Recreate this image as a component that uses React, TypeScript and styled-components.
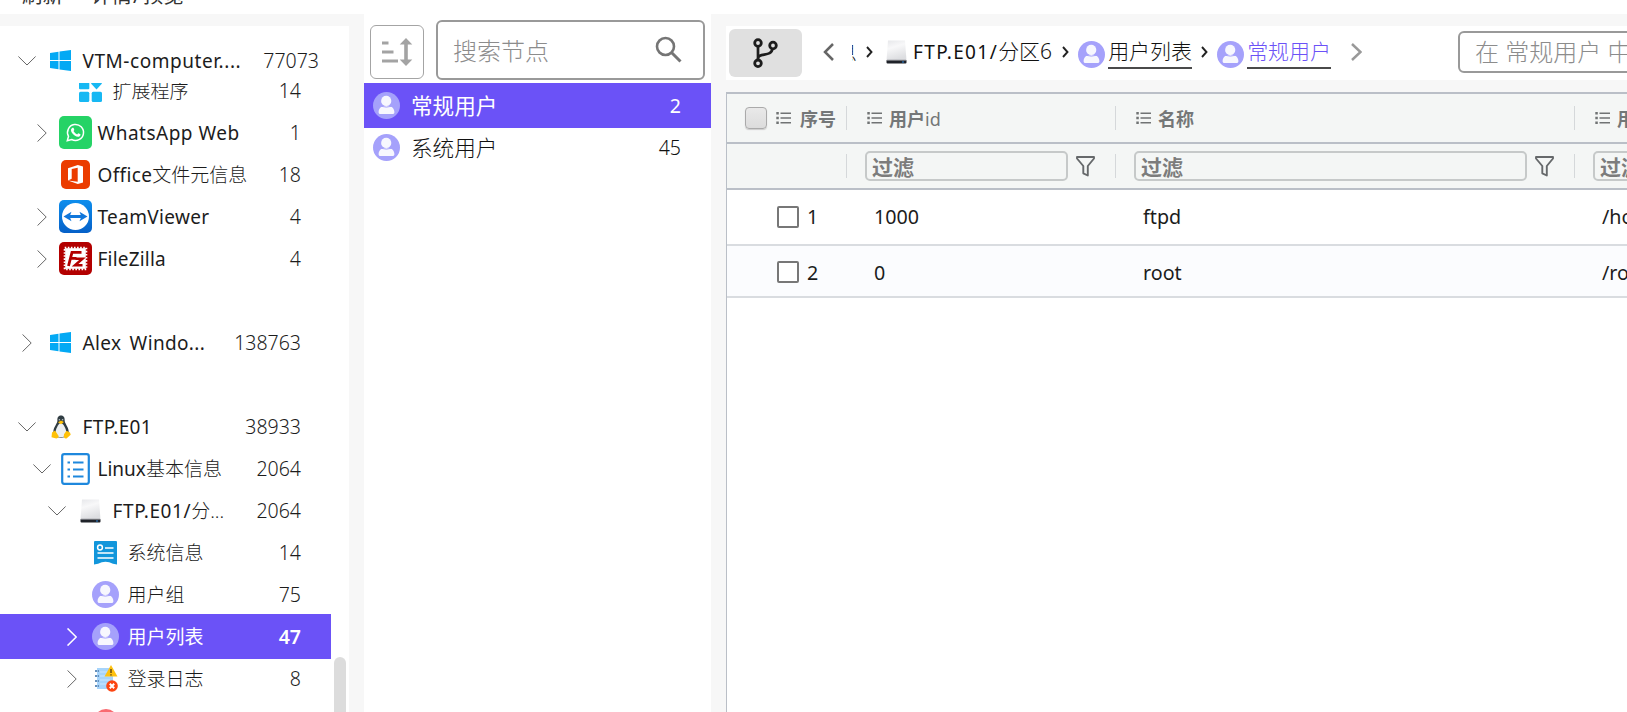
import React from 'react';
import styled, { createGlobalStyle, css } from 'styled-components';

const GlobalStyle = createGlobalStyle`
  * { box-sizing: border-box; }
  body { margin: 0; overflow: hidden; background: #f7f7f7; }
  svg { display: block; flex: none; }
`;

const sans = `"Noto Sans", "Noto Sans CJK SC", sans-serif`;
const accent = '#6b52f7';

const Page = styled.div`
  width: 100%;
  height: 712px;
  display: flex;
  flex-direction: column;
  overflow: hidden;
  font: 300 20px ${sans};
  color: #111;
  white-space: nowrap;
`;

const MenuBar = styled.div`
  height: 14px;
  flex: none;
  display: flex;
  align-items: flex-end;
  gap: 28px;
  padding: 0 0 6px 22px;
  background: #fff;
  overflow: hidden;
  font-size: 20.5px;
  font-weight: 400;
  line-height: 26px;
  color: #333;
`;

const Slash = styled.span`
  padding: 0 2px 0 1px;
`;

const Workspace = styled.div`
  flex: 1;
  min-height: 0;
  display: grid;
  grid-template-columns: 349px 347px 1fr;
  column-gap: 15px;
`;

/* ---------- left tree ---------- */

const TreePanel = styled.aside`
  margin-top: 12px;
  display: flex;
  flex-direction: column;
  background: #fff;
  min-height: 0;
`;

const PinnedNode = styled.div`
  height: 57px;
  padding-top: 12px;
  flex: none;
`;

const TreeScroll = styled.div`
  flex: 1;
  min-height: 0;
  display: flex;
  justify-content: space-between;
  overflow: hidden;
`;

const TreeRows = styled.div`
  width: 331px;
  margin-top: -15px;
`;

const ScrollTrack = styled.div`
  width: 15px;
  padding-top: 574px;
`;

const ScrollThumb = styled.div`
  width: 12px;
  height: 200px;
  border-radius: 6px;
  background: #dcdcdc;
`;

const Node = styled.div<{ $depth: number; $selected?: boolean }>`
  height: 45px;
  margin-bottom: -3px;
  padding: 0 30px 0 ${(p) => 12 + p.$depth * 15}px;
  display: grid;
  grid-template-columns: 30px 35px 1fr auto;
  column-gap: 0;
  align-items: center;
  justify-items: center;
  color: #1c1c1c;
  ${(p) =>
    p.$selected &&
    css`
      background: ${accent};
      color: #fff;
      font-weight: 400;
    `}
`;

const IconSlot = styled.span`
  display: flex;
  margin-left: 2px;
`;

const Label = styled.span`
  justify-self: start;
  padding-left: 5.5px;
  font-size: 19px;
  line-height: 28px;
`;

const Latin = styled.span<{ $track?: number; $words?: number }>`
  font-size: 19px;
  font-weight: 400;
  letter-spacing: ${(p) => p.$track ?? 0.35}px;
  word-spacing: ${(p) => p.$words ?? 0}px;
`;

const Count = styled.span<{ $strong?: boolean }>`
  padding-top: 1px;
  font-size: 19.5px;
  line-height: 28px;
  font-weight: ${(p) => (p.$strong ? 600 : 300)};
`;

/* ---------- middle list ---------- */

const ListPanel = styled.section`
  background: #fff;
`;

const ListTools = styled.div`
  height: 69px;
  display: flex;
  align-items: flex-start;
  gap: 12px;
  padding: 6px 6px 0;
`;

const SortButton = styled.div`
  width: 54px;
  height: 54px;
  margin-top: 5px;
  padding-bottom: 1px;
  display: grid;
  place-items: center;
  border: 1px solid #a4a4a4;
  border-radius: 6px;
`;

const SearchBox = styled.div`
  flex: 1;
  height: 60px;
  display: flex;
  align-items: center;
  justify-content: space-between;
  padding: 0 21px 2px 15px;
  border: 2px solid #999;
  border-radius: 6px;
  font-size: 24px;
  color: #8c8c8c;
`;

const ListRow = styled.div<{ $selected?: boolean }>`
  height: 45px;
  margin-bottom: -3px;
  padding: 0 30px 0 9px;
  display: flex;
  align-items: center;
  font-size: 21.6px;
  line-height: 30px;
  ${(p) =>
    p.$selected &&
    css`
      background: ${accent};
      color: #fff;
      font-weight: 400;
    `}
`;

const ListName = styled.span`
  flex: 1;
  padding: 1px 0 0 11px;
`;

const ListCount = styled.span<{ $strong?: boolean }>`
  padding-top: 1px;
  font-size: 19.5px;
  font-weight: ${(p) => (p.$strong ? 400 : 300)};
`;

/* ---------- right content ---------- */

const Content = styled.main`
  min-width: 0;
  overflow: hidden;
  display: flex;
  flex-direction: column;
`;

const PathBar = styled.div`
  height: 54px;
  margin: 12px 0;
  padding-left: 3px;
  flex: none;
  display: flex;
  align-items: center;
  background: #fff;
  overflow: hidden;
`;

const BranchButton = styled.div`
  width: 73px;
  height: 48px;
  flex: none;
  display: grid;
  place-items: center;
  border-radius: 6px;
  background: #e0e0e0;
`;

const Crumbs = styled.nav`
  width: 656px;
  flex: none;
  height: 54px;
  padding: 0 0 2px 21px;
  display: flex;
  align-items: center;
  font-size: 21px;
`;

const CutCrumb = styled.span`
  width: 5px;
  margin-left: 18px;
  display: flex;
  justify-content: flex-end;
  overflow: hidden;
  line-height: 30px;
`;

const Separator = styled.span`
  width: 7px;
  margin: 0 9px 0 9px;
`;

const Crumb = styled.span`
  display: flex;
  align-items: center;
`;

const CrumbText = styled.span<{ $kind?: 'link' | 'current' }>`
  height: 32px;
  margin-left: 3px;
  line-height: 28px;
  color: ${(p) => (p.$kind === 'current' ? accent : '#111')};
  ${(p) =>
    p.$kind &&
    css`
      margin-top: 2px;
      border-bottom: 2px solid #4a4a4a;
    `}
`;

const DiskCrumb = styled(Crumb)`
  margin: 0 1px 0 4px;
  ${CrumbText} { margin-left: 6px; padding-top: 1px; }
`;

const CrumbIcon = styled.span`
  padding-top: 4px;
`;

const Forward = styled.span`
  margin: 0 0 0 20px;
`;

const FilterAll = styled.div`
  width: 400px;
  height: 42px;
  flex: none;
  margin-bottom: 2px;
  padding-left: 15px;
  border: 2px solid #999;
  border-radius: 6px;
  font-size: 24px;
  line-height: 38px;
  color: #8c8c8c;
`;

const Table = styled.div`
  flex: 1;
  border-top: 2px solid #babfc7;
  border-left: 1px solid #babfc7;
  background: #fff;
`;

const tableColumns = css`
  display: grid;
  grid-template-columns: 120px 269px 459px 1fr;
`;

const HeadRow = styled.div<{ $height: number }>`
  ${tableColumns}
  height: ${(p) => p.$height}px;
  align-items: center;
  background: #f4f6f5;
  border-bottom: 2px solid #babfc7;
  color: #747778;
`;

const HeadCell = styled.div`
  height: 24px;
  display: flex;
  align-items: center;
  gap: 7px;
  padding-left: 20px;
  border-right: 1px solid #d5d8da;
  font-size: 18px;
  font-weight: 600;
  &:first-child { padding-left: 18px; gap: 9px; }
`;

const HeadId = styled.span`
  font-weight: 400;
`;

const FilterCell = styled.div`
  height: 24px;
  display: flex;
  align-items: center;
  gap: 8px;
  padding: 0 20px 0 18px;
  border-right: 1px solid #d5d8da;
`;

const FilterInput = styled.div`
  flex: 1;
  height: 30px;
  padding-left: 5px;
  border: 2px solid #c6c9c9;
  border-radius: 5px;
  font-size: 21px;
  font-weight: 700;
  line-height: 29px;
  color: #7c7c7c;
`;

const BodyRow = styled.div<{ $height: number; $alt?: boolean }>`
  ${tableColumns}
  height: ${(p) => p.$height}px;
  align-items: center;
  background: ${(p) => (p.$alt ? '#fbfcfe' : '#fff')};
  border-bottom: 2px solid #d9dce0;
  font-weight: 400;
  color: #1c1c1c;
  padding: ${(p) => (p.$alt ? '2px 0 0' : '0 0 1px')};
`;

const BodyCell = styled.div`
  padding-left: 27px;
  display: flex;
  align-items: center;
  font-size: 19.7px;
`;

const IndexCell = styled(BodyCell)`
  padding-left: 50px;
  gap: 8px;
`;

const HeaderCheck = styled.span`
  width: 22px;
  height: 22px;
  border: 1px solid #aaa;
  border-radius: 4px;
  background: linear-gradient(#e9e9e9, #dcdcdc);
  box-shadow: 0 1px 1px #ccc;
`;

const RowCheck = styled.span`
  width: 22px;
  height: 22px;
  border: 2px solid #777;
  border-radius: 2px;
  background: #fff;
`;

/* ---------- icons ---------- */

const Arrow = ({ open, color = '#666' }: { open?: boolean; color?: string }) =>
  open ? (
    <svg width="18" height="10" viewBox="0 0 18 10" fill="none" stroke={color}>
      <path d="M.4.5 9 9l8.600-8.500" />
    </svg>
  ) : (
    <svg width="10" height="18" viewBox="0 0 10 18" fill="none" stroke={color} strokeWidth={color === '#fff' ? 1.5 : 1}>
      <path d="M.5.4 9.200 9 .5 17.600" />
    </svg>
  );

const WindowsIcon = () => (
  <svg width="21" height="21" viewBox="0 0 21 21" fill="#03a9f4">
    <path d="M0 3 8.500 1.800V10H0zM9.500 1.600 21 0v10H9.500zM0 11h8.500v8.200L0 18zM9.500 11H21v10L9.500 19.400z" />
  </svg>
);

const ExtensionIcon = () => (
  <svg width="23" height="23" viewBox="0 0 23 23" fill="#17b8f3">
    <rect width="10.300" height="10.300" rx="1" />
    <path d="M17.500 -1 23 4.500 17.500 10.500 12 4.500z" />
    <rect y="12.700" width="10.300" height="10.300" rx="1.500" />
    <rect x="12.700" y="12.700" width="10.300" height="10.300" rx="1.500" />
  </svg>
);

const WhatsAppIcon = () => (
  <svg width="33" height="33" viewBox="0 0 33 33">
    <rect width="33" height="33" rx="5" fill="#25d366" />
    <path d="m8.300 24.700 1.200-4.400a8 8 0 1 1 3.200 3.200z" fill="none" stroke="#fff" strokeWidth="1.500" />
    <path d="M13.100 12c.5-.5 1.300-.4 1.500.1l.7 1.700c.1.400-.6 1-.8 1.300.9 1.700 2 2.500 3.700 3.300.4-.2.900-1.200 1.300-1.100l1.900.9c.3.600-.2 1.800-1.100 2.200-1.300.6-3 .1-4.700-1-2-1.400-3.500-3.300-3.600-5.200 0-.9.500-1.700 1.100-2.200z" fill="#fff" />
  </svg>
);

const OfficeIcon = () => (
  <svg width="29" height="29" viewBox="0 0 29 29">
    <rect width="29" height="29" rx="5" fill="#eb3c00" />
    <path d="M7 8.200 16.800 5l5.200 1.400v16L16.800 24 7 20.500l9.700 1.200V7.700l-6 1.400v9.700L7 20.500z" fill="#fff" />
  </svg>
);

const TeamViewerIcon = () => (
  <svg width="33" height="33" viewBox="0 0 33 33">
    <defs>
      <linearGradient id="tv" x2="0" y2="1">
        <stop stopColor="#0d8eed" />
        <stop offset="1" stopColor="#0560c8" />
      </linearGradient>
    </defs>
    <rect width="33" height="33" rx="5" fill="url(#tv)" />
    <circle cx="16.500" cy="16.500" r="13.500" fill="#fff" />
    <path d="m4.500 16.500 8-4.800-1.300 3.300h10.600l-1.300-3.300 8 4.800-8 4.800 1.300-3.300H11.200l1.300 3.300z" fill="#1077db" />
  </svg>
);

const FileZillaIcon = () => (
  <svg width="33" height="33" viewBox="0 0 33 33">
    <rect width="33" height="33" rx="5" fill="#b30000" />
    <rect x="6.200" y="6.200" width="20.600" height="20.600" fill="#fff" />
    <rect x="5.700" y="5.700" width="21.600" height="21.600" fill="none" stroke="#fff" strokeWidth="2" strokeDasharray="1.600 1.490" />
    <g fill="none" stroke="#b30000" strokeWidth="2.800">
      <path d="M9.500 24 13 10.300h9.500M11.500 16.300h6" />
      <path d="M16.500 16.700h7L16 23.200h7.500" strokeWidth="2.500" />
    </g>
  </svg>
);

const TuxIcon = () => (
  <svg width="20" height="24" viewBox="0 0 20 24">
    <path d="M10 .5c3 0 3.800 2.300 3.700 5.200.1 3 4 6.500 4 11 0 3-3 6-7.700 6s-7.600-3-7.600-6c0-4.500 3.900-8 4-11C6.200 2.800 7 .5 10 .5z" fill="#303c42" />
    <path d="M9.800 8c2.300 0 5.500 6 5.500 9.500 0 3-2 4.800-5.300 4.800s-5.500-1.800-5.500-4.800S7.500 8 9.800 8z" fill="#eceff1" />
    <circle cx="8.400" cy="4.700" r=".8" fill="#b9c2c6" />
    <circle cx="11.600" cy="4.700" r=".8" fill="#b9c2c6" />
    <path d="M7 7.200 10 5.500l3 1.500L10 9.300zM1 17.500l3-2 3.500 5.200c.5 2-1.500 3-3.200 2.600L.5 22.200zM19 17.500l-3.500-1.700-2.500 3.400c-.7 3 .5 4.600 2.500 4.200l4.200-3.600z" fill="#ffc107" />
  </svg>
);

const ListDocIcon = () => (
  <svg width="29" height="32" viewBox="0 0 29 32" fill="none" stroke="#1e88dd" strokeWidth="2.200">
    <rect x="1.200" y="1.200" width="26.600" height="29.600" rx="2" />
    <path d="M12 9.500h10.500M12 16.500h10.500M12 23.500h10.500M6.500 9.500h2.500M6.500 16.500h2.500M6.500 23.500h2.500" strokeWidth="2" />
  </svg>
);

const DiskIcon = () => (
  <svg width="21" height="24" viewBox="0 0 21 24">
    <defs>
      <linearGradient id="disk" x2=".3" y2="1">
        <stop stopColor="#e6e7ea" />
        <stop offset=".4" stopColor="#f8f8f9" />
        <stop offset="1" stopColor="#dddee1" />
      </linearGradient>
    </defs>
    <path d="M2 .5h17L20.500 20.500H.5z" fill="url(#disk)" />
    <path d="M.5 20.300h20v2.100q0 1-1 1h-18q-1 0-1-1z" fill="#1f2229" />
    <path d="M1 20.200h19" stroke="#85888d" strokeWidth=".8" />
    <path d="M16 22h2" stroke="#2d83d5" />
  </svg>
);

const SystemInfoIcon = () => (
  <svg width="23" height="24" viewBox="0 0 23 24">
    <path d="M0 1q0-1 1-1h21q1 0 1 1v22.500l-4-.8q-7.500-4-15 0l-4 .8z" fill="#1296db" />
    <g fill="none" stroke="#fff" strokeWidth="1.500">
      <circle cx="6" cy="6.500" r="2.400" />
      <path d="M11 7h8.500M3.500 12h16M3.500 17h16" />
    </g>
  </svg>
);

const UserIcon = () => (
  <svg width="27" height="27" viewBox="0 0 27 27">
    <circle cx="13.500" cy="13.500" r="13.500" fill="#a5a1fb" />
    <g fill="#f7f7fe">
      <circle cx="13.200" cy="8.900" r="5.100" />
      <path d="M5.600 20.200c0-4 3.400-6.700 7.900-6.700s7.900 2.700 7.900 6.700c0 1.200-.7 1.800-1.800 1.800H7.400c-1.100 0-1.800-.6-1.800-1.800z" />
    </g>
    <path d="M7.500 14.200q6 1.800 11.500 0" fill="none" stroke="#a5a1fb" strokeWidth="1" />
  </svg>
);

const LogIcon = () => (
  <svg width="24" height="27" viewBox="0 0 24 27">
    <path d="M3 3h16v21H3z" fill="#a7d4fb" />
    <path d="M6 7h10M6 11h10M6 15h10M6 19h10" stroke="#cce6ff" />
    <path d="M1 6h4M1 11h4M1 16h4M1 21h4" stroke="#6690bb" strokeWidth="2" strokeDasharray="2 .7" />
    <path d="m17 0 6.500 11.500H10.500z" fill="#fec110" />
    <path d="M17 4v4M17 9.200v1.300" stroke="#654b13" strokeWidth="1.500" />
    <circle cx="18" cy="21" r="5.800" fill="#fc4512" />
    <path d="m15.800 18.800 4.400 4.400M20.200 18.800l-4.400 4.400" stroke="#fff" strokeWidth="2" />
  </svg>
);

const RedIcon = () => (
  <svg width="24" height="24" viewBox="0 0 24 24">
    <circle cx="12" cy="12" r="12" fill="#f96a70" />
  </svg>
);

const SortIcon = () => (
  <svg width="32" height="28" viewBox="0 0 32 28" fill="#a3a3a3">
    <path d="M1 3.500h6.500v3H1zM1 12.500h11.500v3H1zM1 21.500h16v3H1zM25 0l6.300 6.500h-4.500v15h4.500L25 28l-6.300-6.500h4.500v-15h-4.500z" />
  </svg>
);

const SearchIcon = () => (
  <svg width="27" height="27" viewBox="0 0 27 27" fill="none" stroke="#757575" strokeWidth="2.600">
    <circle cx="10.500" cy="10.500" r="8.500" />
    <path d="m16.500 16.500 9 9" strokeWidth="3" />
  </svg>
);

const BranchIcon = () => (
  <svg width="25" height="30" viewBox="0 0 25 30" fill="none" stroke="#1d1d1d" strokeWidth="2.800">
    <circle cx="5" cy="5" r="3.300" />
    <circle cx="20" cy="7.500" r="3.300" />
    <circle cx="5" cy="25.300" r="3.300" />
    <path d="M5 8.300V22M5 20.500c0-6 14-1.500 14.300-9.700" strokeWidth="2.700" />
  </svg>
);

const Chevron = ({ dir, size, color }: { dir: 'left' | 'right'; size: 'small' | 'big'; color: string }) => {
  const [w, h, s] = size === 'big' ? [11, 18, 2.5] : [7, 12, 1.9];
  const d = dir === 'left' ? `M${w - 1} 1 2 ${h / 2} ${w - 1} ${h - 1}` : `M1 1 ${w - 1.5} ${h / 2} 1 ${h - 1}`;
  return (
    <svg width={w} height={h} viewBox={`0 0 ${w} ${h}`} fill="none" stroke={color} strokeWidth={s}>
      <path d={d} />
    </svg>
  );
};

const MenuIcon = () => (
  <svg width="15" height="14" viewBox="0 0 15 14" stroke="#707374" strokeWidth="1.600">
    <path d="M4.500 2.200H15M4.500 7H15M4.500 11.800H15" />
    <path d="M.3 2.200h2.500M.3 7h2.500M.3 11.800h2.500" strokeWidth="2.400" />
  </svg>
);

const FunnelIcon = () => (
  <svg width="19" height="21" viewBox="0 0 19 21" fill="none" stroke="#66696b" strokeWidth="1.900" strokeLinejoin="round">
    <path d="M1 1h17v1.500L11.800 10v9.500L7.300 17.300V10L1 2.500z" />
  </svg>
);

/* ---------- data ---------- */

type TreeItem = {
  depth: number;
  arrow?: 'open' | 'closed';
  icon?: React.ReactNode;
  latin?: string;
  track?: number;
  words?: number;
  text?: string;
  count?: string;
  selected?: boolean;
};

const pinned: TreeItem = { depth: 0, arrow: 'open', icon: <WindowsIcon />, latin: 'VTM-computer....', track: 0.55, count: '77073' };

const tree: TreeItem[] = [
  { depth: 2, icon: <ExtensionIcon />, text: '扩展程序', count: '14' },
  { depth: 1, arrow: 'closed', icon: <WhatsAppIcon />, latin: 'WhatsApp Web', track: 0.5, count: '1' },
  { depth: 1, icon: <OfficeIcon />, latin: 'Office', text: '文件元信息', count: '18' },
  { depth: 1, arrow: 'closed', icon: <TeamViewerIcon />, latin: 'TeamViewer', count: '4' },
  { depth: 1, arrow: 'closed', icon: <FileZillaIcon />, latin: 'FileZilla', track: 0.2, count: '4' },
  { depth: 0 },
  { depth: 0, arrow: 'closed', icon: <WindowsIcon />, latin: 'Alex Windo...', words: 3, count: '138763' },
  { depth: 0 },
  { depth: 0, arrow: 'open', icon: <TuxIcon />, latin: 'FTP.E01', track: 0.4, count: '38933' },
  { depth: 1, arrow: 'open', icon: <ListDocIcon />, latin: 'Linux', track: 0, text: '基本信息', count: '2064' },
  { depth: 2, arrow: 'open', icon: <DiskIcon />, latin: 'FTP.E01/', track: 0.6, text: '分...', count: '2064' },
  { depth: 3, icon: <SystemInfoIcon />, text: '系统信息', count: '14' },
  { depth: 3, icon: <UserIcon />, text: '用户组', count: '75' },
  { depth: 3, arrow: 'closed', icon: <UserIcon />, text: '用户列表', count: '47', selected: true },
  { depth: 3, arrow: 'closed', icon: <LogIcon />, text: '登录日志', count: '8' },
  { depth: 3, icon: <RedIcon /> },
];

const TreeNode = ({ item }: { item: TreeItem }) => (
  <Node $depth={item.depth} $selected={item.selected}>
    <span>{item.arrow && <Arrow open={item.arrow === 'open'} color={item.selected ? '#fff' : undefined} />}</span>
    <IconSlot>{item.icon}</IconSlot>
    <Label>
      {item.latin && <Latin $track={item.track} $words={item.words}>{item.latin}</Latin>}
      {item.text}
    </Label>
    <Count $strong={item.selected}>{item.count}</Count>
  </Node>
);

const HeadTitle = ({ children }: { children: React.ReactNode }) => (
  <>
    <MenuIcon />
    <span>{children}</span>
  </>
);

const rows = [
  { index: '1', id: '1000', name: 'ftpd', dir: '/home/ftpd', height: 56 },
  { index: '2', id: '0', name: 'root', dir: '/root', height: 52 },
];

export default function App() {
  return (
    <>
      <GlobalStyle />
      <Page>
        <MenuBar>
          <span>刷新</span>
          <span>详情<Slash>/</Slash>预览</span>
        </MenuBar>
        <Workspace>
          <TreePanel>
            <PinnedNode>
              <TreeNode item={pinned} />
            </PinnedNode>
            <TreeScroll>
              <TreeRows>
                {tree.map((item, i) => (
                  <TreeNode key={i} item={item} />
                ))}
              </TreeRows>
              <ScrollTrack>
                <ScrollThumb />
              </ScrollTrack>
            </TreeScroll>
          </TreePanel>

          <ListPanel>
            <ListTools>
              <SortButton>
                <SortIcon />
              </SortButton>
              <SearchBox>
                <span>搜索节点</span>
                <SearchIcon />
              </SearchBox>
            </ListTools>
            <ListRow $selected>
              <UserIcon />
              <ListName>常规用户</ListName>
              <ListCount $strong>2</ListCount>
            </ListRow>
            <ListRow>
              <UserIcon />
              <ListName>系统用户</ListName>
              <ListCount>45</ListCount>
            </ListRow>
          </ListPanel>

          <Content>
            <PathBar>
              <BranchButton>
                <BranchIcon />
              </BranchButton>
              <Crumbs>
                <Chevron dir="left" size="big" color="#666" />
                <CutCrumb>息</CutCrumb>
                <Separator>
                  <Chevron dir="right" size="small" color="#222" />
                </Separator>
                <DiskCrumb>
                  <DiskIcon />
                  <CrumbText>
                    <Latin $track={1.4}>FTP.E01/</Latin>分区6
                  </CrumbText>
                </DiskCrumb>
                <Separator>
                  <Chevron dir="right" size="small" color="#222" />
                </Separator>
                <Crumb>
                  <CrumbIcon>
                    <UserIcon />
                  </CrumbIcon>
                  <CrumbText $kind="link">用户列表</CrumbText>
                </Crumb>
                <Separator>
                  <Chevron dir="right" size="small" color="#222" />
                </Separator>
                <Crumb>
                  <CrumbIcon>
                    <UserIcon />
                  </CrumbIcon>
                  <CrumbText $kind="current">常规用户</CrumbText>
                </Crumb>
                <Forward>
                  <Chevron dir="right" size="big" color="#999" />
                </Forward>
              </Crumbs>
              <FilterAll>在 常规用户 中搜索</FilterAll>
            </PathBar>

            <Table>
              <HeadRow $height={50}>
                <HeadCell>
                  <HeaderCheck />
                  <HeadTitle>序号</HeadTitle>
                </HeadCell>
                <HeadCell>
                  <HeadTitle>用户<HeadId>id</HeadId></HeadTitle>
                </HeadCell>
                <HeadCell>
                  <HeadTitle>名称</HeadTitle>
                </HeadCell>
                <HeadCell>
                  <HeadTitle>用户目录</HeadTitle>
                </HeadCell>
              </HeadRow>
              <HeadRow $height={46}>
                <FilterCell />
                {[0, 1, 2].map((n) => (
                  <FilterCell key={n}>
                    <FilterInput>过滤</FilterInput>
                    {n < 2 && <FunnelIcon />}
                  </FilterCell>
                ))}
              </HeadRow>
              {rows.map((row, i) => (
                <BodyRow key={row.index} $height={row.height} $alt={i % 2 === 1}>
                  <IndexCell>
                    <RowCheck />
                    {row.index}
                  </IndexCell>
                  <BodyCell>{row.id}</BodyCell>
                  <BodyCell>{row.name}</BodyCell>
                  <BodyCell>{row.dir}</BodyCell>
                </BodyRow>
              ))}
            </Table>
          </Content>
        </Workspace>
      </Page>
    </>
  );
}
